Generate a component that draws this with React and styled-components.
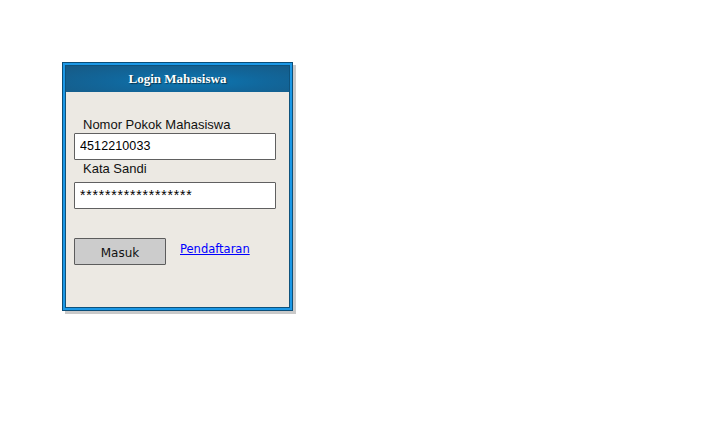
import React from "react";
import styled, { createGlobalStyle } from "styled-components";

const GlobalStyle = createGlobalStyle`
  body {
    margin: 0;
    background: #ffffff;
    font-family: "Liberation Sans", Arial, sans-serif;
  }
`;

const Page = styled.div`
  padding: 62px 0 0 62px;
  min-height: 425px;
  box-sizing: border-box;
`;

const Frame = styled.div`
  width: 231px;
  height: 249px;
  box-sizing: border-box;
  border: 1px solid #0b4e78;
  padding: 2px;
  background: #1c98e6;
  box-shadow: 3px 3px 0 #c9c9c9;
`;

const Inner = styled.div`
  height: 100%;
  box-sizing: border-box;
  border: 1px solid #0e527c;
  background: #ece9e3;
  display: flex;
  flex-direction: column;
`;

const Header = styled.div`
  height: 26px;
  flex: none;
  display: flex;
  align-items: center;
  justify-content: center;
  background: radial-gradient(ellipse at 55% 60%, #0c78b4 0%, #11679c 45%, #175a85 100%);
  color: #ffffff;
  font-family: "Liberation Serif", "Times New Roman", serif;
  font-weight: bold;
  font-size: 13px;
  text-shadow: 1px 1px 1px rgba(0, 0, 0, 0.55);
`;

const Body = styled.form`
  display: flex;
  flex-direction: column;
  align-items: flex-start;
  padding: 25px 0 0 8px;
`;

const Label = styled.label`
  display: block;
  font-size: 13px;
  line-height: 15px;
  color: #111111;
  padding-left: 9px;
  margin-bottom: ${(p) => p.gap || 0}px;
`;

const Field = styled.input`
  width: 202px;
  height: 27px;
  box-sizing: border-box;
  border: 1.5px solid #606060;
  border-radius: 1px;
  background: #ffffff;
  padding: 0 0 2px 5px;
  margin: 0 0 ${(p) => p.gap || 0}px 0;
  font-family: "Liberation Sans", Arial, sans-serif;
  font-size: ${(p) => (p.secret ? "14px" : "12.5px")};
  letter-spacing: ${(p) => (p.secret ? "0.8px" : "0.1px")};
  color: #000000;
  outline: none;
`;

const Actions = styled.div`
  display: flex;
  align-items: flex-start;
  gap: 14px;
`;

const Button = styled.button`
  width: 92px;
  height: 27px;
  box-sizing: border-box;
  border: 1.5px solid #5c5c5c;
  border-radius: 1px;
  background: #cccccc;
  font-family: "Comic Sans MS", "DejaVu Sans", sans-serif;
  font-size: 12px;
  color: #111111;
  padding: 2px 0 0;
  cursor: pointer;
`;

const Link = styled.a`
  margin-top: 4px;
  font-family: "Comic Sans MS", "DejaVu Sans", sans-serif;
  font-size: 11.5px;
  color: #0000ff;
  text-decoration: underline;
  cursor: pointer;
`;

export default function App() {
  return (
    <Page>
      <GlobalStyle />
      <Frame>
        <Inner>
          <Header>Login Mahasiswa</Header>
          <Body onSubmit={(e) => e.preventDefault()}>
            <Label gap={1}>Nomor Pokok Mahasiswa</Label>
            <Field type="text" defaultValue="4512210033" gap={1} />
            <Label gap={6}>Kata Sandi</Label>
            <Field type="text" secret defaultValue="******************" gap={29} readOnly />
            <Actions>
              <Button type="submit">Masuk</Button>
              <Link>Pendaftaran</Link>
            </Actions>
          </Body>
        </Inner>
      </Frame>
    </Page>
  );
}
